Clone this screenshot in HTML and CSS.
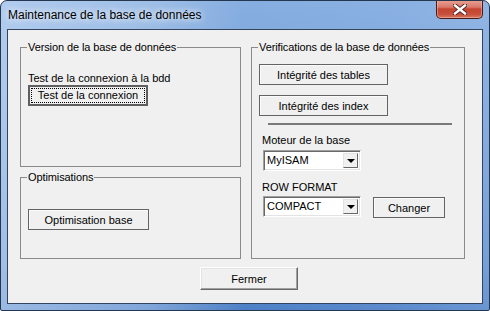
FILE: index.html
```html
<!DOCTYPE html>
<html lang="fr">
<head>
<meta charset="utf-8">
<title>Maintenance de la base de données</title>
<link rel="stylesheet" href="styles.css">
</head>
<body>
<div class="window">
  <div class="titlebar">
    <span class="title">Maintenance de la base de données</span>
    <div class="close" aria-label="Fermer">
      <svg width="14" height="11" viewBox="0 0 14 11">
        <path d="M2 1.5 L12 9.5 M12 1.5 L2 9.5" stroke="#4a2020" stroke-width="4.2" stroke-linecap="square"/>
        <path d="M2 1.5 L12 9.5 M12 1.5 L2 9.5" stroke="#ffffff" stroke-width="2.4" stroke-linecap="square"/>
      </svg>
    </div>
  </div>
  <div class="client">
    <div class="columns">
      <div class="left-col">
        <fieldset class="group group-version">
          <legend>Version de la base de données</legend>
          <div class="label">Test de la connexion à la bdd</div>
          <button class="btn btn-default btn-test"><span class="focus">Test de la connexion</span></button>
        </fieldset>
        <fieldset class="group group-optim">
          <legend>Optimisations</legend>
          <button class="btn btn-optim">Optimisation base</button>
        </fieldset>
      </div>
      <fieldset class="group group-verif">
        <legend>Verifications de la base de données</legend>
        <button class="btn btn-wide">Intégrité des tables</button>
        <button class="btn btn-wide btn-second">Intégrité des index</button>
        <div class="separator"></div>
        <div class="label label-engine">Moteur de la base</div>
        <div class="combo combo-engine">
          <span class="combo-value">MyISAM</span>
          <span class="combo-arrow"><span class="tri"></span></span>
        </div>
        <div class="label label-row">ROW FORMAT</div>
        <div class="row-line">
          <div class="combo">
            <span class="combo-value">COMPACT</span>
            <span class="combo-arrow"><span class="tri"></span></span>
          </div>
          <button class="btn btn-change">Changer</button>
        </div>
      </fieldset>
    </div>
    <div class="footer">
      <button class="btn btn-raised btn-close">Fermer</button>
    </div>
  </div>
</div>
</body>
</html>
```

FILE: styles.css
```css
html, body {
  margin: 0;
  padding: 0;
  background: #ffffff;
}

.window {
  box-sizing: border-box;
  width: 490px;
  height: 311px;
  border: 1px solid #26364f;
  border-radius: 7px 7px 2px 2px;
  padding: 0 6px 6px 6px;
  background:
    linear-gradient(90deg, rgba(205,224,247,0.6) 0%, rgba(190,212,240,0.45) 30%, rgba(120,160,215,0) 50%, rgba(150,185,230,0.2) 80%, rgba(170,200,236,0.3) 100%),
    linear-gradient(180deg, #86aee0 0%, #77a1d9 40%, #5e8fd0 85%, #4d7fc6 100%);
  font-family: "Liberation Sans", Arial, sans-serif;
  font-size: 11px;
  color: #000;
  overflow: hidden;
}

.titlebar {
  height: 28px;
  display: flex;
  justify-content: space-between;
  align-items: flex-start;
}

.title {
  font-size: 12px;
  line-height: 28px;
  padding-left: 1px;
  color: #000;
  text-shadow: 0 0 6px rgba(255,255,255,0.95), 0 0 10px rgba(255,255,255,0.7);
}

.close {
  box-sizing: border-box;
  width: 47px;
  height: 19px;
  margin-top: -1px;
  border: 1px solid #4a1b17;
  border-top: none;
  border-radius: 0 0 5px 5px;
  background: linear-gradient(180deg, #e8a493 0%, #d9786a 40%, #c4442f 50%, #c8503b 80%, #d77a5e 100%);
  box-shadow: inset 0 0 0 1px rgba(255,200,190,0.45);
  display: flex;
  align-items: center;
  justify-content: center;
}

.client {
  box-sizing: border-box;
  height: 275px;
  border: 1px solid #34445e;
  background: #f0f0f0;
  padding: 11px 0 0 12px;
}

.columns {
  display: flex;
  gap: 10px;
  align-items: flex-start;
}

.left-col {
  display: flex;
  flex-direction: column;
  gap: 4px;
  width: 221px;
}

.group {
  box-sizing: border-box;
  margin: 0;
  border: 1px solid #8a8a8a;
  padding: 0 0 0 7px;
  min-width: 0;
}

.group legend {
  line-height: 13px;
  padding: 0 1px;
  margin-left: -1px;
  letter-spacing: -0.1px;
}

.group-version {
  width: 221px;
  height: 126px;
  padding-top: 18px;
}

.group-optim {
  width: 221px;
  height: 88px;
  padding-top: 25px;
}

.group-verif {
  width: 214px;
  height: 218px;
  padding-top: 10px;
  display: flex;
  flex-direction: column;
  align-items: flex-start;
}

.label {
  line-height: 13px;
  white-space: nowrap;
}

.btn {
  box-sizing: border-box;
  display: block;
  font-family: inherit;
  font-size: 11px;
  color: #000;
  background: #f0f0f0;
  padding: 0;
  margin: 0;
  height: 21px;
  border: 1px solid #646464;
  box-shadow: inset 1px 1px 0 #fbfbfb;
  border-radius: 0;
}

.btn-raised {
  border-color: #ffffff #696969 #696969 #ffffff;
  box-shadow: inset -1px -1px 0 #a0a0a0, inset 1px 1px 0 #e3e3e3;
}

.btn-default {
  border: 2px solid #5f5f5f;
  box-shadow: none;
  padding: 1px;
}

.btn-default .focus {
  display: block;
  height: 100%;
  box-sizing: border-box;
  border: 1px dotted #000;
  line-height: 13px;
}

.btn-test {
  width: 120px;
}

.btn-optim {
  width: 121px;
}

.btn-wide {
  width: 129px;
}

.btn-second {
  margin-top: 10px;
}

.separator {
  width: 184px;
  height: 0;
  border-top: 2px solid #7a7a7a;
  margin: 7px 0 0 9px;
}

.label-engine {
  margin: 9px 0 0 3px;
}

.label-row {
  margin: 10px 0 0 3px;
}

.combo {
  box-sizing: border-box;
  width: 98px;
  height: 21px;
  display: flex;
  background: #fff;
  border: 1px solid;
  border-color: #a0a0a0 #ffffff #ffffff #a0a0a0;
  box-shadow: inset 1px 1px 0 #696969, inset -1px -1px 0 #e3e3e3;
  padding: 2px 2px 2px 2px;
}

.combo-engine {
  margin: 3px 0 0 4px;
}

.combo-value {
  flex: 1;
  line-height: 15px;
  padding-left: 1px;
}

.combo-arrow {
  box-sizing: border-box;
  width: 15px;
  background: #f0f0f0;
  border: 1px solid;
  border-color: #e3e3e3 #696969 #696969 #e3e3e3;
  display: flex;
  align-items: center;
  justify-content: center;
}

.tri {
  width: 0;
  height: 0;
  border-left: 4px solid transparent;
  border-right: 4px solid transparent;
  border-top: 4px solid #000;
}

.row-line {
  display: flex;
  align-items: flex-start;
  gap: 12px;
  margin: 2px 0 0 4px;
}

.btn-change {
  width: 72px;
  margin-top: 1px;
}

.footer {
  padding: 8px 0 0 180px;
}

.btn-close {
  width: 98px;
  height: 23px;
}
```
